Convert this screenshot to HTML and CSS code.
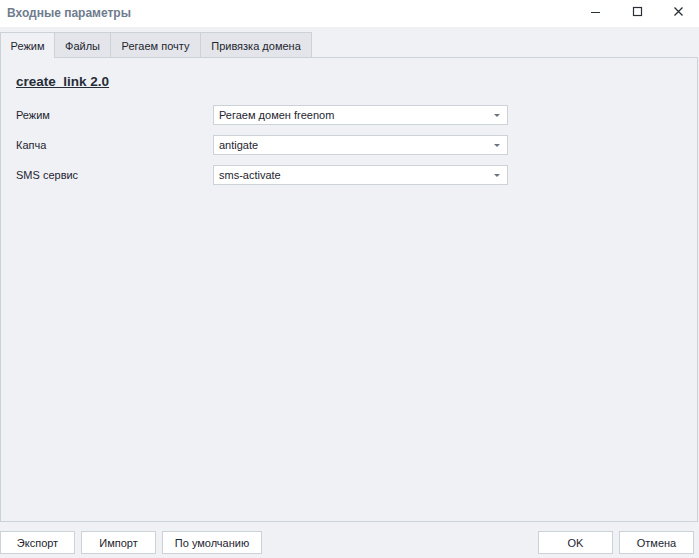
FILE: index.html
```html
<!DOCTYPE html>
<html>
<head>
<meta charset="utf-8">
<link rel="stylesheet" href="styles.css">
</head>
<body>
<div class="window">
  <div class="titlebar">
    <div class="title">Входные параметры</div>
    <div class="controls">
      <span class="ctl"><svg width="12" height="12" viewBox="0 0 12 12"><path d="M1 6.5H10" stroke="#2b2f36" stroke-width="1"/></svg></span>
      <span class="ctl"><svg width="12" height="12" viewBox="0 0 12 12"><rect x="1.5" y="1.5" width="8" height="8" fill="none" stroke="#2b2f36" stroke-width="1.2"/></svg></span>
      <span class="ctl"><svg width="12" height="12" viewBox="0 0 12 12"><path d="M1.5 1.5L9.5 9.5M9.5 1.5L1.5 9.5" stroke="#2b2f36" stroke-width="1.3"/></svg></span>
    </div>
  </div>
  <div class="tabs">
    <div class="tab active t1">Режим</div>
    <div class="tab t2">Файлы</div>
    <div class="tab t3">Регаем почту</div>
    <div class="tab t4">Привязка домена</div>
  </div>
  <div class="panel">
    <div class="heading">create_link 2.0</div>
    <div class="rows">
      <div class="row"><span class="label">Режим</span><div class="select"><span>Регаем домен freenom</span><i class="arrow"></i></div></div>
      <div class="row"><span class="label">Капча</span><div class="select"><span>antigate</span><i class="arrow"></i></div></div>
      <div class="row"><span class="label">SMS сервис</span><div class="select"><span>sms-activate</span><i class="arrow"></i></div></div>
    </div>
  </div>
  <div class="footer">
    <div class="group">
      <button class="btn">Экспорт</button>
      <button class="btn">Импорт</button>
      <button class="btn wide">По умолчанию</button>
    </div>
    <div class="group">
      <button class="btn">OK</button>
      <button class="btn">Отмена</button>
    </div>
  </div>
</div>
</body>
</html>
```
FILE: styles.css
```css
* { box-sizing: border-box; }
html, body { margin: 0; padding: 0; }
body {
  width: 699px; height: 558px; overflow: hidden;
  background: #f0f1f5;
  font-family: "Liberation Sans", Arial, sans-serif;
  font-size: 11px;
  color: #1e2530;
}
.window { display: flex; flex-direction: column; height: 558px; }
.titlebar {
  height: 27px; background: #ffffff;
  display: flex; align-items: center; justify-content: space-between;
}
.title {
  padding-left: 7px; font-weight: bold; font-size: 12px; color: #6f7c8e;
  margin-top: -2px;
}
.controls { display: flex; }
.ctl { width: 42px; height: 27px; display: flex; align-items: center; justify-content: center; margin-top: -3px; }
.ctl:last-child { width: 40px; }
.tabs { display: flex; margin-top: 4px; height: 26px; align-items: flex-end; }
.tab {
  height: 25px; display: flex; align-items: center; justify-content: center;
  background: #e3e5ea; border: 1px solid #cdd1d8; border-bottom: none; border-left: none;
  color: #1e2530; padding-top: 1px;
}
.tab.active {
  height: 26px; background: #f0f1f5; border-left: 1px solid #cdd1d8;
  margin-bottom: -1px; position: relative; z-index: 1;
}
.t1 { width: 55px; }
.t2 { width: 56px; }
.t3 { width: 90px; }
.t4 { width: 111px; }
.panel {
  flex: 1; border: 1px solid #cdd1d8; margin-right: 1px;
  padding: 16px 0 0 15px;
}
.heading {
  font-size: 13.5px; font-weight: bold; text-decoration: underline; color: #262d38;
  height: 16px; line-height: 16px;
}
.rows { margin-top: 15px; display: flex; flex-direction: column; gap: 10px; }
.row { display: flex; align-items: center; height: 20px; }
.label { width: 197px; }
.select {
  width: 295px; height: 20px; background: #ffffff; border: 1px solid #cdd1d8;
  display: flex; align-items: center; justify-content: space-between; padding: 0 7px 0 5px;
}
.arrow {
  width: 0; height: 0; border-left: 3px solid transparent; border-right: 3px solid transparent;
  border-top: 3px solid #6b7280; margin-top: 1px;
}
.footer {
  height: 36px; display: flex; justify-content: space-between; align-items: flex-start;
  padding: 9px 5px 0 0;
}
.group { display: flex; gap: 6px; }
.btn {
  height: 23px; width: 75px; background: #ffffff; border: 1px solid #cdd1d8;
  font-family: inherit; font-size: 11px; color: #1e2530; padding: 0; border-radius: 0;
}
.btn.wide { width: 100px; }
```
